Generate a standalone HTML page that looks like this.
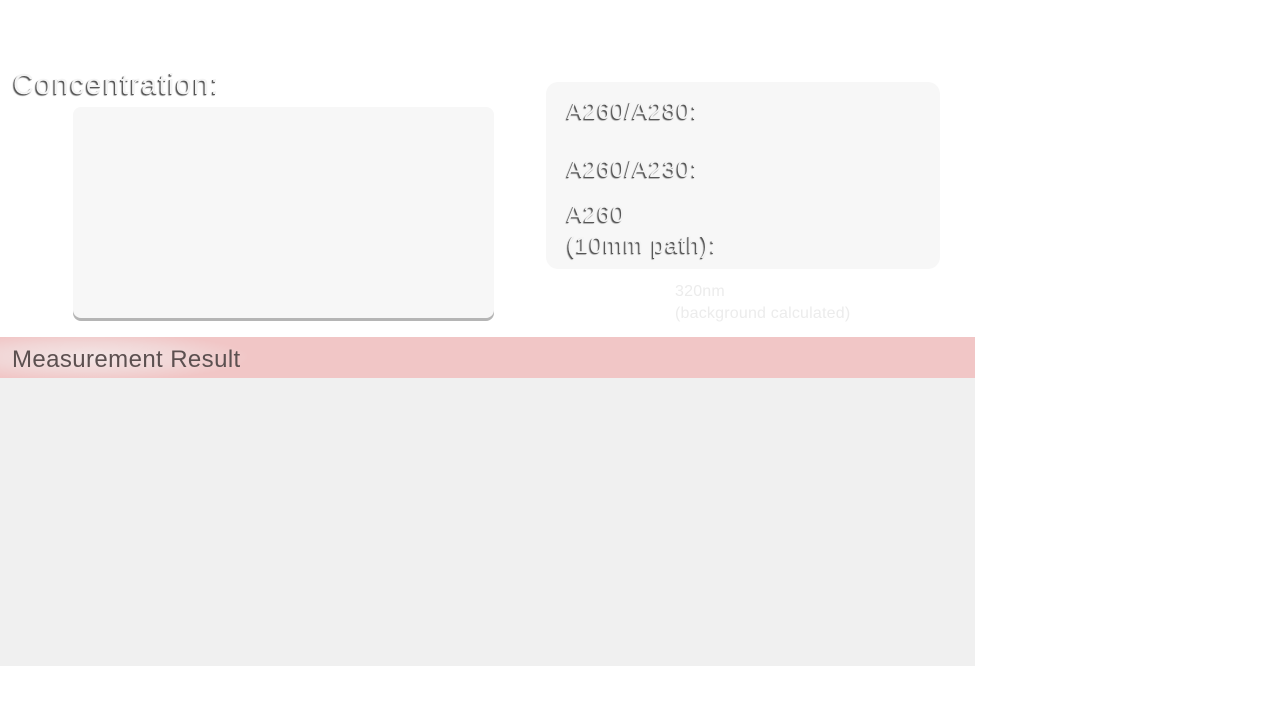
<!DOCTYPE html>
<html><head><meta charset="utf-8"><style>
body{margin:0;width:1280px;height:720px;background:#fff;font-family:"Liberation Sans",sans-serif;position:relative;overflow:hidden}
.sh{color:#f4f4f4;text-shadow:-1px 1px 0 #555,-1.5px 1.5px 1px #777}
#conc{position:absolute;left:13px;top:69px;font-size:29px;letter-spacing:1.3px}
#box1{position:absolute;left:73px;top:107px;width:421px;height:211px;background:#f7f7f7;border-radius:8px;box-shadow:0 3px 0 #b5b5b5}
#box2{position:absolute;left:546px;top:82px;width:394px;height:187px;background:#f7f7f7;border-radius:12px}
.l{position:absolute;left:567px;font-size:23px;line-height:31px;letter-spacing:1.1px}
#note{position:absolute;left:675px;top:281px;font-size:16px;line-height:22px;color:#ececec;letter-spacing:0.2px}
#hdr{position:absolute;left:0;top:337px;width:975px;height:41px;background:radial-gradient(ellipse 160px 24px at 90px 20px,#f3e6e6 0%,#f1d6d6 60%,#f1c6c6 100%);}
#hdr span{position:absolute;left:12px;top:9px;font-size:24px;color:#5c5050;letter-spacing:0.4px}
#body{position:absolute;left:0;top:378px;width:975px;height:288px;background:#f0f0f0}
</style></head><body>
<div id="conc" class="sh">Concentration:</div>
<div id="box1"></div>
<div id="box2"></div>
<div class="l sh" style="top:96px">A260/A280:</div>
<div class="l sh" style="top:154px">A260/A230:</div>
<div class="l sh" style="top:199px">A260<br>(10mm path):</div>
<div id="note">320nm<br>(background calculated)</div>
<div id="hdr"><span>Measurement Result</span></div>
<div id="body"></div>
</body></html>
